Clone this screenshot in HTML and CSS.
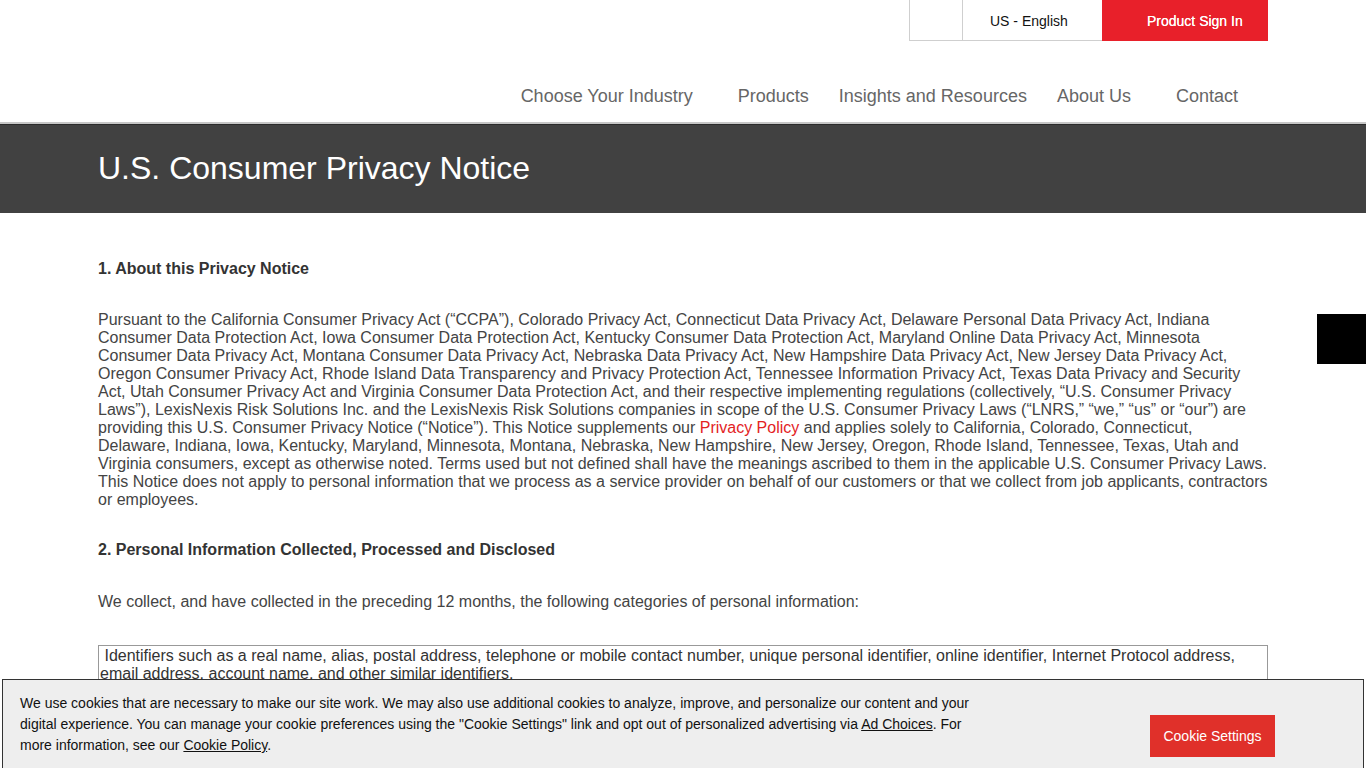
FILE: index.html
```html
<!DOCTYPE html>
<html lang="en">
<head>
<meta charset="utf-8">
<title>U.S. Consumer Privacy Notice</title>
<link rel="stylesheet" href="styles.css">
</head>
<body>
<header class="site-header">
  <div class="utility">
    <div class="utility-inner">
      <div class="util-cell util-empty"></div>
      <div class="util-cell util-lang">US - English</div>
      <a class="util-signin" href="#">Product Sign In</a>
    </div>
  </div>
  <nav class="main-nav">
    <ul class="nav-list">
      <li class="nav-item nav-drop">Choose Your Industry</li>
      <li class="nav-item">Products</li>
      <li class="nav-item">Insights and Resources</li>
      <li class="nav-item nav-drop">About Us</li>
      <li class="nav-item nav-last">Contact</li>
    </ul>
  </nav>
</header>

<section class="title-band">
  <div class="container">
    <h1 class="page-title">U.S. Consumer Privacy Notice</h1>
  </div>
</section>

<main class="container content">
  <h3 class="sec-head">1. About this Privacy Notice</h3>
  <p class="para">Pursuant to the California Consumer Privacy Act (“CCPA”), Colorado Privacy Act, Connecticut Data Privacy Act, Delaware Personal Data Privacy Act, Indiana Consumer Data Protection Act, Iowa Consumer Data Protection Act, Kentucky Consumer Data Protection Act, Maryland Online Data Privacy Act, Minnesota Consumer Data Privacy Act, Montana Consumer Data Privacy Act, Nebraska Data Privacy Act, New Hampshire Data Privacy Act, New Jersey Data Privacy Act, Oregon Consumer Privacy Act, Rhode Island Data Transparency and Privacy Protection Act, Tennessee Information Privacy Act, Texas Data Privacy and Security Act, Utah Consumer Privacy Act and Virginia Consumer Data Protection Act, and their respective implementing regulations (collectively, “U.S. Consumer Privacy Laws”), LexisNexis Risk Solutions Inc. and the LexisNexis Risk Solutions companies in scope of the U.S. Consumer Privacy Laws (“LNRS,” “we,” “us” or “our”) are providing this U.S. Consumer Privacy Notice (“Notice”). This Notice supplements our <a class="red-link" href="#">Privacy Policy</a> and applies solely to California, Colorado, Connecticut, Delaware, Indiana, Iowa, Kentucky, Maryland, Minnesota, Montana, Nebraska, New Hampshire, New Jersey, Oregon, Rhode Island, Tennessee, Texas, Utah and Virginia consumers, except as otherwise noted. Terms used but not defined shall have the meanings ascribed to them in the applicable U.S. Consumer Privacy Laws. This Notice does not apply to personal information that we process as a service provider on behalf of our customers or that we collect from job applicants, contractors or employees.</p>

  <h3 class="sec-head sec-head-2">2. Personal Information Collected, Processed and Disclosed</h3>
  <p class="para para-short">We collect, and have collected in the preceding 12 months, the following categories of personal information:</p>

  <table class="info-table">
    <tr>
      <td>&nbsp;Identifiers such as a real name, alias, postal address, telephone or mobile contact number, unique personal identifier, online identifier, Internet Protocol address, email address, account name, and other similar identifiers.</td>
    </tr>
    <tr>
      <td>Personal information categories listed in the California Customer Records statute, such as name, signature, physical characteristics or description, address, telephone number.</td>
    </tr>
  </table>
</main>

<div class="side-tab"></div>

<div class="cookie-banner">
  <p class="cookie-text">We use cookies that are necessary to make our site work. We may also use additional cookies to analyze, improve, and personalize our content and your digital experience. You can manage your cookie preferences using the "Cookie Settings" link and opt out of personalized advertising via <a href="#" class="cookie-link">Ad Choices</a>. For more information, see our <a href="#" class="cookie-link">Cookie Policy</a>.</p>
  <button class="cookie-btn" type="button">Cookie Settings</button>
</div>
</body>
</html>
```

FILE: styles.css
```css
* { box-sizing: border-box; }

html, body {
  margin: 0;
  padding: 0;
}

body {
  font-family: "Liberation Sans", Arial, sans-serif;
  color: #333;
  background: #fff;
}

.container {
  width: 1170px;
  margin: 0 auto;
}

/* ---------- header ---------- */
.site-header {
  border-bottom: 2px solid #c6c6c6;
}

.utility {
  width: 1170px;
  margin: 0 auto;
  display: flex;
  justify-content: flex-end;
}

.utility-inner {
  display: flex;
  height: 41px;
  border-left: 1px solid #cfcfcf;
}

.util-cell {
  height: 41px;
  border-bottom: 1px solid #cfcfcf;
  font-size: 14px;
  color: #111;
  display: flex;
  align-items: center;
}

.util-empty {
  width: 53px;
  border-right: 1px solid #cfcfcf;
}

.util-lang {
  width: 139px;
  padding-left: 27px;
  padding-top: 1px;
}

.util-signin {
  width: 166px;
  height: 41px;
  background: #e8202a;
  color: #fff;
  font-size: 14px;
  font-weight: normal;
  text-shadow: 0 0 0.4px #fff;
  text-decoration: none;
  display: flex;
  align-items: center;
  padding-left: 45px;
  padding-top: 1px;
}

.main-nav {
  width: 1170px;
  margin: 0 auto;
  padding-top: 45px;
  height: 81px;
}

.nav-list {
  list-style: none;
  margin: 0;
  padding: 0;
  display: flex;
  justify-content: flex-end;
  gap: 30px;
}

.nav-item {
  font-size: 18px;
  line-height: 21px;
  color: #666;
}

.nav-drop {
  padding-right: 15px;
}

.nav-last {
  margin-right: 30px;
}

/* ---------- title band ---------- */
.title-band {
  background: #414141;
  border-top: 1px solid #2b2b2b;
  height: 89px;
  display: flex;
  align-items: center;
}

.page-title {
  margin: 0;
  font-size: 32px;
  font-weight: normal;
  color: #fff;
  line-height: 37px;
  padding-bottom: 2px;
}

/* ---------- content ---------- */
.content {
  padding-top: 47px;
  padding-bottom: 120px;
}

.sec-head {
  margin: 0;
  font-size: 16px;
  line-height: 18px;
  font-weight: bold;
  color: #333;
}

.sec-head-2 {
  margin-top: 32px;
}

.para {
  margin: 33px 0 0;
  font-size: 16px;
  line-height: 18px;
  color: #444;
}

.para-short {
  margin-top: 34px;
}

.red-link {
  color: #e3231f;
  text-decoration: none;
}

.info-table {
  margin-top: 34px;
  width: 100%;
  border-collapse: collapse;
}

.info-table td {
  border: 1px solid #999;
  padding: 1px 5px 4px 1px;
  font-size: 16px;
  line-height: 18px;
  color: #333;
}

/* ---------- overlays ---------- */
.side-tab {
  position: fixed;
  top: 314px;
  right: 0;
  width: 49px;
  height: 50px;
  background: #000;
}

.cookie-banner {
  position: fixed;
  left: 2px;
  right: 2px;
  bottom: 0;
  height: 89px;
  background: #eeeeee;
  border: 1px solid #333;
  border-bottom: none;
  display: flex;
  align-items: flex-start;
}

.cookie-text {
  margin: 0;
  padding: 13px 0 0 17px;
  width: 975px;
  font-size: 14px;
  line-height: 21px;
  color: #111;
}

.cookie-link {
  color: #111;
  text-decoration: underline;
}

.cookie-btn {
  margin-left: auto;
  margin-right: 88px;
  margin-top: 35px;
  width: 125px;
  height: 42px;
  border: none;
  background: #e0302a;
  color: #fff;
  font-family: "Liberation Sans", Arial, sans-serif;
  font-size: 14px;
  padding: 0;
  cursor: pointer;
}
```
